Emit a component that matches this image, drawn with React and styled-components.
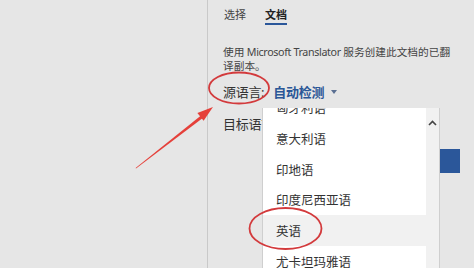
import React from "react";
import styled, { createGlobalStyle } from "styled-components";

const Global = createGlobalStyle`
  html, body { margin: 0; padding: 0; background: #e6e6e6; }
  body { font-family: "Noto Sans", "Noto Sans CJK SC", sans-serif; }
  * { box-sizing: border-box; }
`;

const Page = styled.div`
  position: relative;
  width: 474px;
  height: 268px;
  overflow: hidden;
  display: flex;
  background: #e6e6e6;
`;

const Blank = styled.div`
  width: 207px;
  flex: none;
`;

const Pane = styled.div`
  position: relative;
  flex: 1;
  border-left: 1px solid #c9c9c9;
  padding: 7px 0 0 15px;
  display: flex;
  flex-direction: column;
  color: #333;
  font-family: "Noto Sans", "Noto Sans CJK SC", sans-serif;
`;

const Tabs = styled.div`
  display: flex;
  gap: 19px;
  padding-left: 1px;
`;

const Tab = styled.div`
  font-size: 11px;
  line-height: 16px;
  font-weight: ${(p) => (p.$active ? 700 : 400)};
  color: ${(p) => (p.$active ? "#222" : "#444")};
  border-bottom: 2px solid ${(p) => (p.$active ? "#2b579a" : "transparent")};
`;

const Desc = styled.div`
  margin-top: 20px;
  font-size: 10.7px;
  line-height: 14px;
  color: #444;
  white-space: nowrap;
`;

const Latin = styled.span`
  letter-spacing: -0.35px;
`;

const FieldRow = styled.div`
  display: flex;
  align-items: center;
  height: 20px;
  margin-top: ${(p) => p.$mt}px;
  font-size: 13px;
`;

const Label = styled.span`
  color: #333;
  letter-spacing: -0.3px;
`;

const Value = styled.span`
  margin-left: 9px;
  color: #2b5797;
  font-weight: 700;
  letter-spacing: -0.3px;
`;

const Caret = styled.span`
  margin-left: 7px;
  width: 0;
  height: 0;
  border-left: 3.5px solid transparent;
  border-right: 3.5px solid transparent;
  border-top: 4px solid #5a6f92;
  margin-top: 2px;
`;

const ButtonRow = styled.div`
  display: flex;
  justify-content: flex-end;
  margin-top: 16px;
  padding-right: 14px;
`;

const BlueButton = styled.div`
  width: 80px;
  height: 24px;
  background: #2b579a;
`;

const Dropdown = styled.div`
  position: absolute;
  left: 54px;
  top: 108px;
  width: 178px;
  height: 170px;
  background: #f1f1f1;
  border: 1px solid #cfcfcf;
  border-top: none;
  overflow: hidden;
  display: flex;
`;

const List = styled.div`
  width: 163px;
  margin-top: -16px;
  display: flex;
  flex-direction: column;
`;

const Item = styled.div`
  height: 31px;
  display: flex;
  align-items: center;
  padding-left: 13px;
  font-size: 12.5px;
  color: #333;
  font-family: "Noto Sans CJK SC", "Noto Sans", sans-serif;
  background: ${(p) => (p.$hover ? "#f1f1f1" : "#ffffff")};
`;

const ScrollCol = styled.div`
  flex: 1;
  display: flex;
  justify-content: center;
  padding-top: 12px;
  color: #444;
`;

const Overlay = styled.svg`
  position: absolute;
  left: 0;
  top: 0;
  width: 474px;
  height: 268px;
  pointer-events: none;
`;

const items = ["匈牙利语", "意大利语", "印地语", "印度尼西亚语", "英语", "尤卡坦玛雅语"];

export default function App() {
  return (
    <>
      <Global />
      <Page>
        <Blank />
        <Pane>
          <Tabs>
            <Tab>选择</Tab>
            <Tab $active>文档</Tab>
          </Tabs>
          <Desc>
            使用<Latin> Microsoft Translator </Latin>服务创建此文档的已翻
            <br />
            译副本。
          </Desc>
          <FieldRow $mt={8}>
            <Label>源语言:</Label>
            <Value>自动检测</Value>
            <Caret />
          </FieldRow>
          <FieldRow $mt={12}>
            <Label>目标语言:</Label>
          </FieldRow>
          <ButtonRow>
            <BlueButton />
          </ButtonRow>
          <Dropdown>
            <List>
              {items.map((t) => (
                <Item key={t} $hover={t === "英语"}>
                  {t}
                </Item>
              ))}
            </List>
            <ScrollCol>
              <svg width="9" height="6" viewBox="0 0 9 6">
                <path d="M1 5 L4.5 1.5 L8 5" fill="none" stroke="#444" strokeWidth="1.6" />
              </svg>
            </ScrollCol>
          </Dropdown>
        </Pane>
        <Overlay viewBox="0 0 474 268">
          <ellipse cx="239" cy="88" rx="30" ry="15.5" fill="none" stroke="#d33a3c" strokeWidth="1.8" />
          <ellipse cx="285.5" cy="228.5" rx="36" ry="20.5" fill="none" stroke="#d33a3c" strokeWidth="1.8" />
          <polygon points="136,168.6 135.6,167.9 201,115.5 202.8,118" fill="#e5403a" />
          <polygon points="213,107 203.6,120.8 197.4,113" fill="#e5403a" />
        </Overlay>
      </Page>
    </>
  );
}
